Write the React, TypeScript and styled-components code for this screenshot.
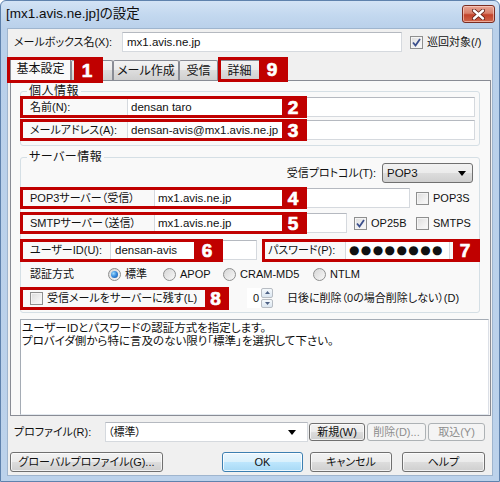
import React from 'react';
import styled, { createGlobalStyle, css } from 'styled-components';

const RED = '#c00000';
const FONT = `"Liberation Sans", "Noto Sans CJK JP", sans-serif`;

const Global = createGlobalStyle`
  html, body { margin: 0; padding: 0; background: #fff; }
  body {
    font-family: ${FONT};
    font-size: 11px;
    color: #111;
    font-feature-settings: "palt";
  }
  * { box-sizing: border-box; }
`;

const Window = styled.div`
  width: 500px;
  height: 482px;
  display: flex;
  flex-direction: column;
  background: linear-gradient(#d3e3f5 0px, #c3d8ef 14px, #b9d0ea 28px, #bcd2eb 100%);
  border: 1px solid #5f82ad;
  border-radius: 6px 6px 0 0;
`;

const TitleBar = styled.div`
  height: 27px;
  flex: none;
  display: flex;
  align-items: flex-start;
  justify-content: space-between;
  padding-left: 5px;
`;

const Title = styled.div`
  font-size: 13.5px;
  line-height: 14px;
  margin-top: 6px;
  color: #0d0d0d;
  white-space: nowrap;
`;

const CloseButton = styled.div`
  width: 33px;
  height: 18px;
  margin-top: 4px;
  margin-right: 4px;
  border: 1px solid #7a2d22;
  border-radius: 3px;
  background: linear-gradient(#e8a493 0%, #d8806b 45%, #c2432b 55%, #d0654a 100%);
  box-shadow: inset 0 0 0 1px rgba(255, 220, 210, 0.6);
  display: flex;
  align-items: center;
  justify-content: center;
`;

const Client = styled.div`
  flex: 1;
  margin: 0 6px 5px 6px;
  border: 1px solid #9fb5ce;
  background: #f0f0f0;
  display: flex;
  flex-direction: column;
`;

const Row = styled.div<{ $h?: number; $mt?: number; $end?: boolean; $pr?: number }>`
  position: relative;
  display: flex;
  align-items: center;
  flex: none;
  height: ${p => p.$h ?? 20}px;
  margin-top: ${p => p.$mt ?? 0}px;
  padding-right: ${p => p.$pr ?? 0}px;
  justify-content: ${p => (p.$end ? 'flex-end' : 'flex-start')};
`;

const Label = styled.span<{ $w?: number; $pl?: number; $mr?: number }>`
  flex: none;
  width: ${p => (p.$w ? `${p.$w}px` : 'auto')};
  padding-left: ${p => p.$pl ?? 0}px;
  margin-right: ${p => p.$mr ?? 0}px;
  white-space: nowrap;
  line-height: 14px;
`;

const Field = styled.div<{ $w: number; $pl?: number; $h?: number }>`
  flex: none;
  width: ${p => p.$w}px;
  height: ${p => p.$h ?? 20}px;
  background: #fff;
  border: 1px solid #d5d9de;
  border-top-color: #b5b9c0;
  padding: 0 0 0 ${p => p.$pl ?? 3}px;
  display: flex;
  align-items: center;
  white-space: nowrap;
  overflow: hidden;
  line-height: 14px;
  font-size: 11.5px;
`;

const Dots = styled.span`
  font-family: "DejaVu Sans", sans-serif;
  font-size: 12px;
  letter-spacing: 1.4px;
`;

const CheckItem = styled.label<{ $ml?: number; $w?: number }>`
  flex: none;
  display: flex;
  align-items: center;
  gap: 4px;
  margin-left: ${p => p.$ml ?? 0}px;
  width: ${p => (p.$w ? `${p.$w}px` : 'auto')};
  white-space: nowrap;
  line-height: 14px;
`;

const CheckBoxEl = styled.span`
  flex: none;
  width: 13px;
  height: 13px;
  border: 1px solid #8e8f8f;
  background: linear-gradient(135deg, #dcdcdc 0%, #f0f0f0 60%, #fbfbfb 100%);
  box-shadow: inset 0 0 0 1px #f4f4f4;
  display: inline-flex;
  align-items: center;
  justify-content: center;
`;

const CheckBox = ({ checked }: { checked?: boolean }) => (
  <CheckBoxEl>
    {checked && (
      <svg width="9" height="9" viewBox="0 0 9 9">
        <path d="M1 4.5 L3.5 7.5 L8 1" fill="none" stroke="#3b4f8c" strokeWidth="1.8" />
      </svg>
    )}
  </CheckBoxEl>
);

const RadioItem = styled.label<{ $w?: number }>`
  flex: none;
  display: flex;
  align-items: center;
  gap: 4px;
  width: ${p => (p.$w ? `${p.$w}px` : 'auto')};
  white-space: nowrap;
  line-height: 14px;
`;

const RadioEl = styled.span<{ $on?: boolean }>`
  flex: none;
  width: 13px;
  height: 13px;
  border-radius: 50%;
  border: 1px solid #8e8f8f;
  background: linear-gradient(135deg, #d6d6d6, #f8f8f8);
  display: inline-flex;
  align-items: center;
  justify-content: center;
  &::after {
    content: '';
    display: ${p => (p.$on ? 'block' : 'none')};
    width: 7px;
    height: 7px;
    border-radius: 50%;
    background: radial-gradient(circle at 35% 35%, #9fdcfb 0%, #3b8ee0 45%, #154f9a 100%);
  }
`;

const TabStrip = styled.div`
  position: relative;
  display: flex;
  align-items: flex-end;
  height: 23px;
  margin-top: 5px;
  padding-left: 2px;
  flex: none;
`;

const Tab = styled.div<{ $w: number; $active?: boolean }>`
  flex: none;
  width: ${p => p.$w}px;
  height: 20px;
  border: 1px solid #898c95;
  border-bottom: none;
  border-radius: 2px 2px 0 0;
  background: linear-gradient(#f3f3f3, #ebebeb 50%, #dddddd 50%, #cfcfcf);
  display: flex;
  align-items: center;
  justify-content: center;
  line-height: 14px;
  white-space: nowrap;
  font-size: 12px;
  ${p =>
    p.$active &&
    css`
      position: relative;
      z-index: 1;
      height: 24px;
      margin-bottom: -1px;
      background: #f9f9f9;
      padding-bottom: 2px;
    `}
`;

const MarkerBox = styled.div<{ $l: number; $t: number; $w: number; $h: number }>`
  position: absolute;
  z-index: 3;
  left: ${p => p.$l}px;
  top: ${p => p.$t}px;
  width: ${p => p.$w}px;
  height: ${p => p.$h}px;
  border: 3px solid ${RED};
  display: flex;
  justify-content: flex-end;
  pointer-events: none;
`;

const MarkerNum = styled.div<{ $w: number }>`
  width: ${p => p.$w}px;
  background: ${RED};
  color: #fff;
  font-family: "Liberation Sans", sans-serif;
  font-weight: 700;
  font-size: 19px;
  line-height: 1;
  -webkit-text-stroke: 0.7px #fff;
  display: flex;
  align-items: center;
  justify-content: center;
`;

const Marker = ({ l, t, w, h, n, nw }: { l: number; t: number; w: number; h: number; n: number; nw: number }) => (
  <MarkerBox $l={l} $t={t} $w={w} $h={h}>
    <MarkerNum $w={nw}>{n}</MarkerNum>
  </MarkerBox>
);

const Panel = styled.div`
  margin: 0 1px 0 2px;
  border: 1px solid #898c95;
  background: #f9f9f9;
  padding-left: 9px;
  display: flex;
  flex-direction: column;
  flex: none;
`;

const Group = styled.fieldset<{ $mt: number; $pb: number }>`
  margin: ${p => p.$mt}px 0 0 0;
  width: 460px;
  min-width: 0;
  border: 1px solid #d5dfe5;
  border-radius: 3px;
  padding: 0 0 ${p => p.$pb}px 0;
  display: flex;
  flex-direction: column;
`;

const Legend = styled.legend`
  font-size: 12px;
  line-height: 12px;
  padding: 0 2px;
  margin-left: 6px;
  letter-spacing: 0.5px;
`;

const ComboButton = styled.div<{ $w: number }>`
  flex: none;
  width: ${p => p.$w}px;
  height: 20px;
  border: 1px solid #707070;
  border-radius: 3px;
  background: linear-gradient(#f2f2f2, #ebebeb 50%, #dddddd 50%, #cfcfcf);
  display: flex;
  align-items: center;
  justify-content: space-between;
  padding: 0 6px 0 4px;
  line-height: 14px;
  font-size: 11.5px;
`;

const ComboField = styled.div<{ $w: number }>`
  flex: none;
  width: ${p => p.$w}px;
  height: 20px;
  background: #fff;
  border: 1px solid #d5d9de;
  border-top-color: #b5b9c0;
  display: flex;
  align-items: center;
  justify-content: space-between;
  padding: 0 11px 0 2px;
  line-height: 14px;
`;

const Arrow = () => (
  <svg width="8" height="5" viewBox="0 0 8 5">
    <path d="M0 0h8L4 5z" fill="#000" />
  </svg>
);

const SpinValue = styled.div`
  flex: none;
  width: 14px;
  height: 20px;
  margin-left: 9px;
  background: #fff;
  display: flex;
  align-items: center;
  justify-content: flex-end;
  padding-right: 2px;
  line-height: 14px;
`;

const Spinner = styled.div`
  flex: none;
  width: 12px;
  height: 20px;
  display: flex;
  flex-direction: column;
  gap: 1px;
  margin-right: 14px;
`;

const SpinBtn = styled.div`
  flex: 1;
  border: 1px solid #b7bcc3;
  border-radius: 2px;
  background: linear-gradient(#f5f9fc, #dbe6f1);
  display: flex;
  align-items: center;
  justify-content: center;
`;

const Desc = styled.div`
  margin-top: 6px;
  width: 469px;
  height: 96px;
  background: #fff;
  border: 1px solid #a5acb5;
  border-right-color: #dbdfe6;
  border-bottom-color: #e3e9ef;
  padding: 2px 1px;
  line-height: 13px;
  font-size: 11.5px;
  white-space: nowrap;
`;

const Button = styled.div<{ $w: number; $h?: number; $ml?: number; $mr?: number; $disabled?: boolean; $default?: boolean }>`
  flex: none;
  width: ${p => p.$w}px;
  height: ${p => p.$h ?? 20}px;
  margin-left: ${p => p.$ml ?? 0}px;
  margin-right: ${p => p.$mr ?? 0}px;
  border: 1px solid #707070;
  border-radius: 3px;
  background: linear-gradient(#f2f2f2, #ebebeb 50%, #dddddd 50%, #cfcfcf);
  box-shadow: inset 0 0 0 1px rgba(255, 255, 255, 0.7);
  display: flex;
  align-items: center;
  justify-content: center;
  line-height: 14px;
  white-space: nowrap;
  ${p =>
    p.$disabled &&
    css`
      color: #8d8d8d;
      border-color: #adb2b5;
      background: #f4f4f4;
      box-shadow: none;
    `}
  ${p =>
    p.$default &&
    css`
      border-color: #3c7fb1;
      background: linear-gradient(#eaf6fd, #d9f0fc 50%, #bee6fd 50%, #a7d9f5);
      box-shadow: inset 0 0 0 1px rgba(255, 255, 255, 0.8);
    `}
`;

const Spacer = styled.div`
  flex: 1;
`;

export default function App() {
  return (
    <>
      <Global />
      <Window>
        <TitleBar>
          <Title>[mx1.avis.ne.jp]の設定</Title>
          <CloseButton>
            <svg width="13" height="11" viewBox="0 0 13 11">
              <path d="M2 1.5 L11 9.5 M11 1.5 L2 9.5" stroke="#5a1a10" strokeWidth="4" strokeLinecap="round" />
              <path d="M2 1.5 L11 9.5 M11 1.5 L2 9.5" stroke="#fff" strokeWidth="2.4" strokeLinecap="round" />
            </svg>
          </CloseButton>
        </TitleBar>
        <Client>
          <Row $mt={3}>
            <Label $w={114} $pl={6}>メールボックス名(X):</Label>
            <Field $w={280} $pl={4}>mx1.avis.ne.jp</Field>
            <CheckItem $ml={8}>
              <CheckBox checked />
              巡回対象(/)
            </CheckItem>
          </Row>

          <TabStrip>
            <Tab $w={61} $active>基本設定</Tab>
            <Tab $w={42} />
            <Tab $w={66}>メール作成</Tab>
            <Tab $w={39}>受信</Tab>
            <Tab $w={43}>詳細</Tab>
            <Marker l={-1} t={0} w={96} h={26} n={1} nw={26} />
            <Marker l={210} t={0} w={70} h={25} n={9} nw={26} />
          </TabStrip>

          <Panel>
            <Group $mt={4} $pb={5}>
              <Legend>個人情報</Legend>
              <Row>
                <Label $w={106} $pl={9}>名前(N):</Label>
                <Field $w={348}>densan taro</Field>
                <Marker l={-1} t={-1} w={287} h={22} n={2} nw={22} />
              </Row>
              <Row $mt={3}>
                <Label $w={106} $pl={9}>メールアドレス(A):</Label>
                <Field $w={348}>densan-avis@mx1.avis.ne.jp</Field>
                <Marker l={-1} t={-1} w={287} h={22} n={3} nw={22} />
              </Row>
            </Group>

            <Group $mt={5} $pb={4}>
              <Legend>サーバー情報</Legend>
              <Row $end $pr={6}>
                <Label $mr={6}>受信プロトコル(T):</Label>
                <ComboButton $w={91}>
                  POP3
                  <Arrow />
                </ComboButton>
              </Row>
              <Row $mt={5}>
                <Label $w={133} $pl={9}>POP3サーバー（受信）</Label>
                <Field $w={256}>mx1.avis.ne.jp</Field>
                <CheckItem $ml={6}>
                  <CheckBox />
                  POP3S
                </CheckItem>
                <Marker l={-1} t={-1} w={287} h={22} n={4} nw={22} />
              </Row>
              <Row $mt={5}>
                <Label $w={133} $pl={9}>SMTPサーバー（送信）</Label>
                <Field $w={193}>mx1.avis.ne.jp</Field>
                <CheckItem $ml={7} $w={62}>
                  <CheckBox checked />
                  OP25B
                </CheckItem>
                <CheckItem>
                  <CheckBox />
                  SMTPS
                </CheckItem>
                <Marker l={-1} t={-1} w={287} h={22} n={5} nw={22} />
              </Row>
              <Row $mt={7}>
                <Label $w={89} $pl={9}>ユーザーID(U):</Label>
                <Field $w={147} $pl={4}>densan-avis</Field>
                <Label $w={88} $pl={11}>パスワード(P):</Label>
                <Field $w={105} $pl={3}>
                  <Dots>●●●●●●●●</Dots>
                </Field>
                <Marker l={-1} t={-1} w={203} h={23} n={6} nw={26} />
                <Marker l={241} t={-1} w={218} h={23} n={7} nw={24} />
              </Row>
              <Row $mt={5} $h={18}>
                <Label $w={87} $pl={9}>認証方式</Label>
                <RadioItem $w={55}>
                  <RadioEl $on />
                  標準
                </RadioItem>
                <RadioItem $w={60}>
                  <RadioEl />
                  APOP
                </RadioItem>
                <RadioItem $w={90}>
                  <RadioEl />
                  CRAM-MD5
                </RadioItem>
                <RadioItem>
                  <RadioEl />
                  NTLM
                </RadioItem>
              </Row>
              <Row $mt={5}>
                <CheckItem $ml={9} $w={208}>
                  <CheckBox />
                  受信メールをサーバーに残す(L)
                </CheckItem>
                <SpinValue>0</SpinValue>
                <Spinner>
                  <SpinBtn>
                    <svg width="5" height="3" viewBox="0 0 5 3">
                      <path d="M0 3h5L2.5 0z" fill="#4d6185" />
                    </svg>
                  </SpinBtn>
                  <SpinBtn>
                    <svg width="5" height="3" viewBox="0 0 5 3">
                      <path d="M0 0h5L2.5 3z" fill="#4d6185" />
                    </svg>
                  </SpinBtn>
                </Spinner>
                <Label>日後に削除（0の場合削除しない）(D)</Label>
                <Marker l={-1} t={-1} w={209} h={23} n={8} nw={21} />
              </Row>
            </Group>

            <Desc>
              ユーザーIDとパスワードの認証方式を指定します。
              <br />
              プロバイダ側から特に言及のない限り「標準」を選択して下さい。
            </Desc>
          </Panel>

          <Row $mt={6}>
            <Label $w={97} $pl={6}>プロファイル(R):</Label>
            <ComboField $w={203}>
              （標準）
              <Arrow />
            </ComboField>
            <Button $w={56} $h={18} $ml={1}>新規(W)</Button>
            <Button $w={59} $h={18} $ml={2} $disabled>削除(D)...</Button>
            <Button $w={57} $h={18} $ml={2} $disabled>取込(Y)</Button>
          </Row>

          <Row $mt={10}>
            <Button $w={153} $ml={2}>グローバルプロファイル(G)...</Button>
            <Spacer />
            <Button $w={81} $default>OK</Button>
            <Button $w={82} $ml={7}>キャンセル</Button>
            <Button $w={83} $ml={10} $mr={7}>ヘルプ</Button>
          </Row>
        </Client>
      </Window>
    </>
  );
}
